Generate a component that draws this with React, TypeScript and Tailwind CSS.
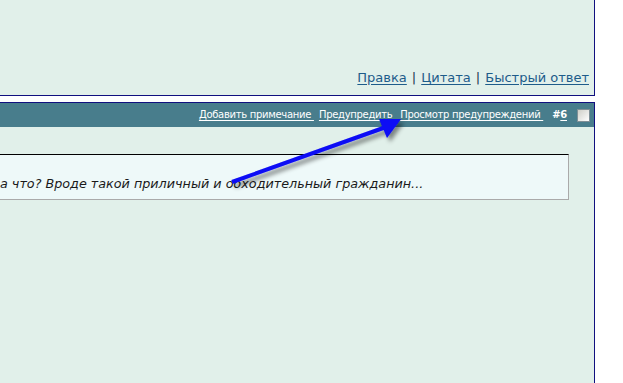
import type { ReactNode } from "react";

const font = { fontFamily: '"DejaVu Sans", Verdana, sans-serif' };

function TopLink({ children }: { children: ReactNode }) {
  return <a className="text-[#1d5c8a] underline underline-offset-2">{children}</a>;
}

function BarLink({ children }: { children: ReactNode }) {
  return <a className="whitespace-pre text-white underline underline-offset-2">{children}</a>;
}

function Arrow() {
  return (
    <svg className="pointer-events-none absolute left-0 top-0" width="623" height="383" viewBox="0 0 623 383">
      <defs>
        <filter id="shadow" x="-20%" y="-20%" width="140%" height="140%">
          <feDropShadow dx="3" dy="4" stdDeviation="2" floodColor="#000" floodOpacity="0.45" />
        </filter>
      </defs>
      <g filter="url(#shadow)">
        <line x1="232" y1="182" x2="386" y2="127" stroke="#0a0af5" strokeWidth="4" strokeLinecap="butt" />
        <polygon points="401,119 379,119 387,138" fill="#0a0af5" />
      </g>
    </svg>
  );
}

export default function App() {
  return (
    <div className="relative h-[383px] w-[623px] overflow-hidden bg-white" style={font}>
      <div className="flex w-[595px] flex-col">
        {/* previous post footer */}
        <div className="flex h-[96px] items-end justify-end border-b border-r border-[#10107f] bg-[#e1f0ea] pb-[9px] pr-[5px] text-[13px] leading-4">
          <TopLink>Правка</TopLink>
          <span className="mx-[5px] text-[#1a3550]">|</span>
          <TopLink>Цитата</TopLink>
          <span className="mx-[5px] text-[#1a3550]">|</span>
          <TopLink>Быстрый ответ</TopLink>
        </div>

        <div className="h-[6px]" />

        {/* post #6 */}
        <div className="flex h-[281px] flex-col border-r border-t border-[#10107f] bg-[#e1f0ea]">
          <div className="flex h-[24px] items-center justify-end bg-[#487d8c] pr-[4px] text-[10px] leading-3 tracking-[-0.3px]">
            <BarLink>{"Добавить примечание\u00a0"}</BarLink>
            <span className="w-[5px]" />
            <BarLink>{"Предупредить\u00a0"}</BarLink>
            <span className="w-[5px]" />
            <BarLink>{"Просмотр предупреждений\u00a0"}</BarLink>
            <span className="ml-[9px] font-bold text-white">
              #<a className="underline underline-offset-2">6</a>
            </span>
            <span className="ml-[10px] h-[13px] w-[13px] border border-[#7f8f96] bg-gradient-to-br from-[#cfcfc8] to-white" />
          </div>

          <div className="flex justify-end pr-[25px] pt-[27px]">
            <div className="-ml-[10px] w-[580px] border-b border-r border-t border-b-[#aaaaaa] border-r-[#aaaaaa] border-t-black bg-[#eef9f9] pb-[7px] pl-[10px] pt-[21px] text-[12.75px] italic leading-4 text-[#1a1a1a]">
              а что? Вроде такой приличный и обходительный гражданин...
            </div>
          </div>
        </div>
      </div>
      <Arrow />
    </div>
  );
}
